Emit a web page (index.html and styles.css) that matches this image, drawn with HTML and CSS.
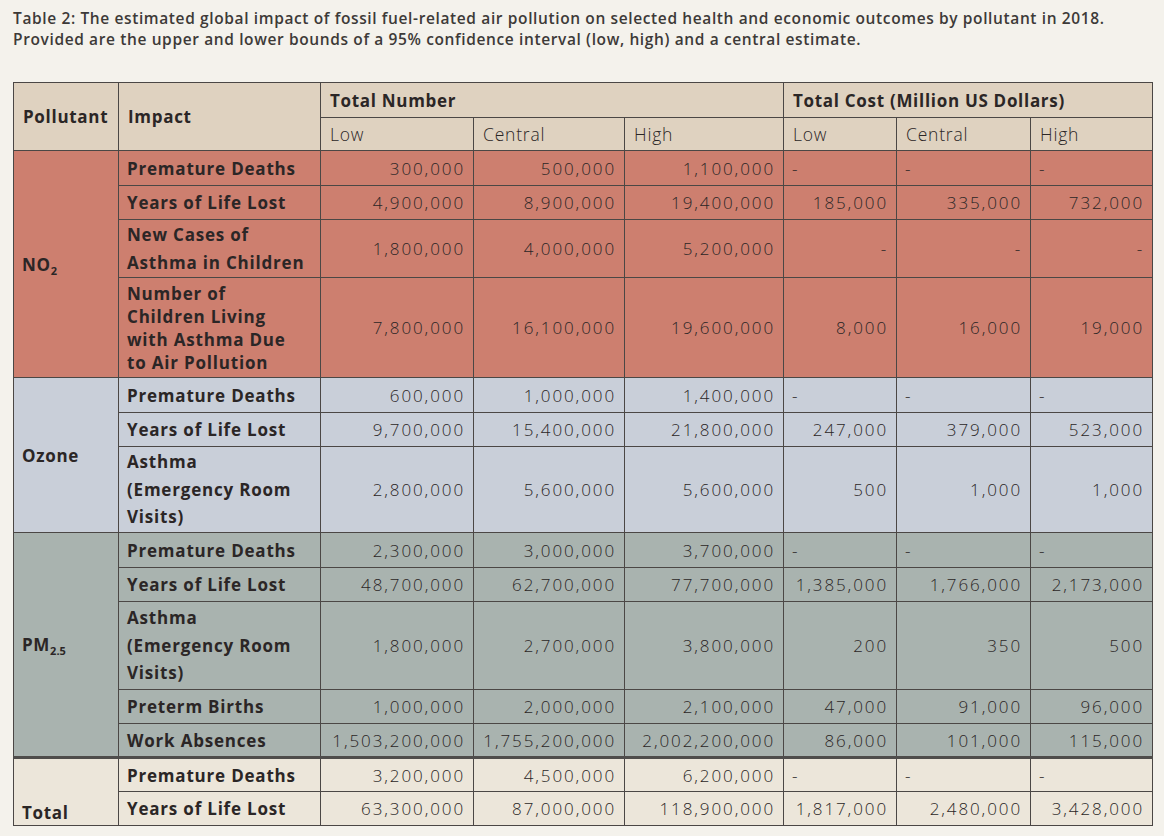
FILE: index.html
```html
<!DOCTYPE html>
<html lang="en">
<head>
<meta charset="utf-8">
<title>Table 2</title>
<link rel="stylesheet" href="styles.css">
</head>
<body>
<div class="page">
  <p class="caption">Table 2: The estimated global impact of fossil fuel-related air pollution on selected health and economic outcomes by pollutant in 2018.<br>Provided are the upper and lower bounds of a 95% confidence interval (low, high) and a central estimate.</p>
  <table class="data">
    <colgroup>
      <col class="c-pol"><col class="c-imp"><col class="c-n1"><col class="c-n2"><col class="c-n3"><col class="c-m1"><col class="c-m2"><col class="c-m3">
    </colgroup>
    <thead>
      <tr class="h1">
        <th rowspan="2" class="bold">Pollutant</th>
        <th rowspan="2" class="bold">Impact</th>
        <th colspan="3" class="bold">Total Number</th>
        <th colspan="3" class="bold">Total Cost (Million US Dollars)</th>
      </tr>
      <tr class="h2">
        <th>Low</th><th>Central</th><th>High</th><th>Low</th><th>Central</th><th>High</th>
      </tr>
    </thead>
    <tbody class="no2">
      <tr class="r1">
        <td rowspan="4" class="pol">NO<sub>2</sub></td>
        <td class="imp">Premature Deaths</td>
        <td class="num">300,000</td><td class="num">500,000</td><td class="num">1,100,000</td>
        <td class="dash">-</td><td class="dash">-</td><td class="dash">-</td>
      </tr>
      <tr class="r1b">
        <td class="imp">Years of Life Lost</td>
        <td class="num">4,900,000</td><td class="num">8,900,000</td><td class="num">19,400,000</td>
        <td class="num">185,000</td><td class="num">335,000</td><td class="num">732,000</td>
      </tr>
      <tr class="r2">
        <td class="imp wide">New Cases of<br>Asthma in Children</td>
        <td class="num">1,800,000</td><td class="num">4,000,000</td><td class="num">5,200,000</td>
        <td class="num">-</td><td class="num">-</td><td class="num">-</td>
      </tr>
      <tr class="r4">
        <td class="imp">Number of<br>Children Living<br>with Asthma Due<br>to Air Pollution</td>
        <td class="num">7,800,000</td><td class="num">16,100,000</td><td class="num">19,600,000</td>
        <td class="num">8,000</td><td class="num">16,000</td><td class="num">19,000</td>
      </tr>
    </tbody>
    <tbody class="ozone">
      <tr class="r1">
        <td rowspan="3" class="pol">Ozone</td>
        <td class="imp">Premature Deaths</td>
        <td class="num">600,000</td><td class="num">1,000,000</td><td class="num">1,400,000</td>
        <td class="dash">-</td><td class="dash">-</td><td class="dash">-</td>
      </tr>
      <tr class="r1b">
        <td class="imp">Years of Life Lost</td>
        <td class="num">9,700,000</td><td class="num">15,400,000</td><td class="num">21,800,000</td>
        <td class="num">247,000</td><td class="num">379,000</td><td class="num">523,000</td>
      </tr>
      <tr class="r3">
        <td class="imp wide">Asthma<br>(Emergency Room<br>Visits)</td>
        <td class="num">2,800,000</td><td class="num">5,600,000</td><td class="num">5,600,000</td>
        <td class="num">500</td><td class="num">1,000</td><td class="num">1,000</td>
      </tr>
    </tbody>
    <tbody class="pm">
      <tr class="r1">
        <td rowspan="5" class="pol">PM<sub>2.5</sub></td>
        <td class="imp">Premature Deaths</td>
        <td class="num">2,300,000</td><td class="num">3,000,000</td><td class="num">3,700,000</td>
        <td class="dash">-</td><td class="dash">-</td><td class="dash">-</td>
      </tr>
      <tr class="r1b">
        <td class="imp">Years of Life Lost</td>
        <td class="num">48,700,000</td><td class="num">62,700,000</td><td class="num">77,700,000</td>
        <td class="num">1,385,000</td><td class="num">1,766,000</td><td class="num">2,173,000</td>
      </tr>
      <tr class="r3b">
        <td class="imp wide">Asthma<br>(Emergency Room<br>Visits)</td>
        <td class="num">1,800,000</td><td class="num">2,700,000</td><td class="num">3,800,000</td>
        <td class="num">200</td><td class="num">350</td><td class="num">500</td>
      </tr>
      <tr class="r1b">
        <td class="imp">Preterm Births</td>
        <td class="num">1,000,000</td><td class="num">2,000,000</td><td class="num">2,100,000</td>
        <td class="num">47,000</td><td class="num">91,000</td><td class="num">96,000</td>
      </tr>
      <tr class="r1b">
        <td class="imp">Work Absences</td>
        <td class="num">1,503,200,000</td><td class="num">1,755,200,000</td><td class="num">2,002,200,000</td>
        <td class="num">86,000</td><td class="num">101,000</td><td class="num">115,000</td>
      </tr>
    </tbody>
    <tbody class="total">
      <tr class="r1b">
        <td rowspan="2" class="pol tot">Total</td>
        <td class="imp">Premature Deaths</td>
        <td class="num">3,200,000</td><td class="num">4,500,000</td><td class="num">6,200,000</td>
        <td class="dash">-</td><td class="dash">-</td><td class="dash">-</td>
      </tr>
      <tr class="r1b">
        <td class="imp">Years of Life Lost</td>
        <td class="num">63,300,000</td><td class="num">87,000,000</td><td class="num">118,900,000</td>
        <td class="num">1,817,000</td><td class="num">2,480,000</td><td class="num">3,428,000</td>
      </tr>
    </tbody>
  </table>
</div>
</body>
</html>
```

FILE: styles.css
```css
html, body {
  margin: 0;
  padding: 0;
  background: #f4f2ec;
}

.page {
  padding: 8px 13px 12px 13px;
  font-family: "Open Sans", "Lato", sans-serif;
  color: #2b2626;
}

.caption {
  margin: 0 0 32px 0;
  font-size: 15.5px;
  line-height: 21px;
  font-weight: 600;
  letter-spacing: 0.62px;
  color: #3d3a38;
}

.data {
  border-collapse: collapse;
  table-layout: fixed;
  width: 1139px;
}

.c-pol { width: 105px; }
.c-imp { width: 202px; }
.c-n1 { width: 153px; }
.c-n2 { width: 151px; }
.c-n3 { width: 159px; }
.c-m1 { width: 113px; }
.c-m2 { width: 134px; }
.c-m3 { width: 122px; }

.data th,
.data td {
  border: 1px solid #4b4745;
  padding: 0 8px;
  font-size: 17px;
  line-height: 23px;
  white-space: nowrap;
}

.data thead th {
  background: #dfd2c0;
  text-align: left;
  font-weight: 300;
  font-size: 17.5px;
  letter-spacing: 0.8px;
  padding-left: 9px;
}

.data thead th.bold {
  font-weight: 700;
  font-size: 17px;
  letter-spacing: 0.7px;
}

.h1 { height: 35px; }
.h2 { height: 33px; }

.r1 { height: 35px; }
.r1b { height: 34px; }
.r2 { height: 58px; }
.r3 { height: 86px; }
.r3b { height: 88px; }
.r4 { height: 100px; }

.pol {
  font-weight: 700;
  letter-spacing: 0.7px;
  vertical-align: middle;
  padding-left: 7px;
}

.pol sub {
  font-size: 11px;
  vertical-align: -4px;
  line-height: 0;
  letter-spacing: 0;
}

.pol.tot {
  vertical-align: bottom;
  padding-bottom: 1px;
}

.imp {
  font-weight: 700;
  letter-spacing: 0.8px;
  padding-left: 7px;
}

.imp.wide {
  line-height: 27.5px;
}

.num {
  text-align: right;
  font-weight: 300;
  font-size: 17.5px;
  letter-spacing: 1.9px;
  padding-right: 7px;
}

.dash {
  text-align: left;
  font-weight: 300;
  padding-left: 8px;
}

.no2 td { background: #cd7f6f; }
.ozone td { background: #c9cfd9; }
.pm td { background: #a9b3af; }
.total td { background: #ece6da; }

.total tr:first-child td {
  border-top: 3px solid #4f4d4b;
}
```
